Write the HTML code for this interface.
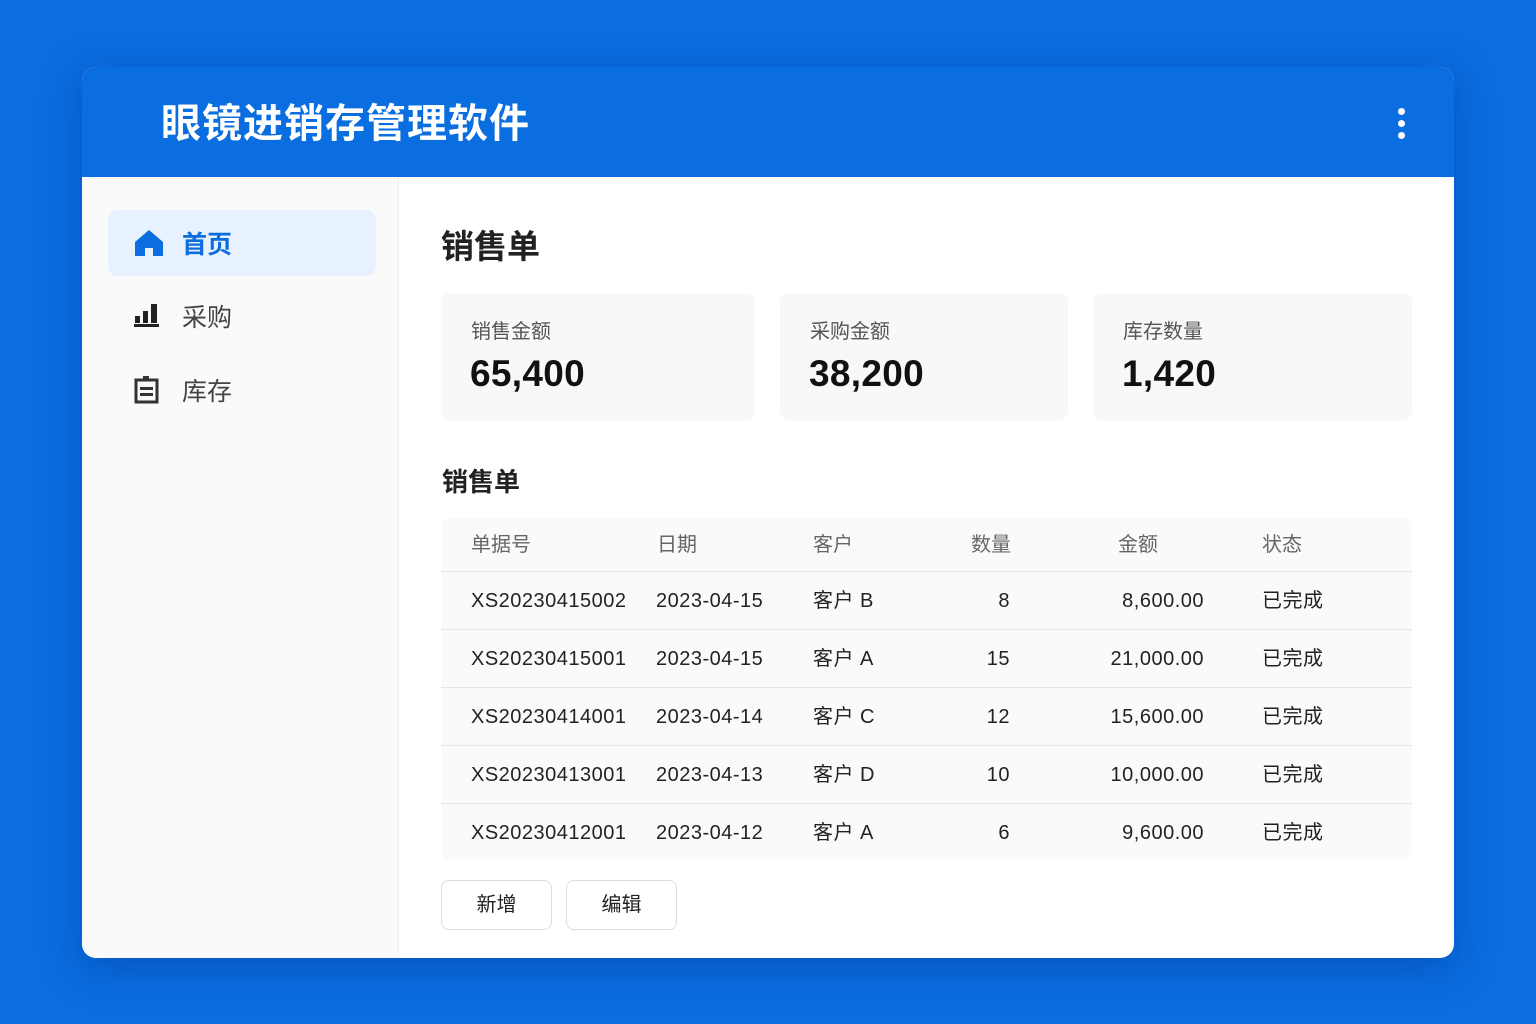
<!DOCTYPE html>
<html><head><meta charset="utf-8"><style>
*{margin:0;padding:0;box-sizing:border-box}
body{width:1536px;height:1024px;background:#0a6de0;font-family:"Liberation Sans","Noto Sans CJK SC",sans-serif;position:relative;overflow:hidden}
.card{position:absolute;left:82px;top:67px;width:1372px;height:891px;background:#fff;border-radius:14px;overflow:hidden;box-shadow:0 10px 40px rgba(0,40,120,.35)}
.hdr{position:absolute;left:0;top:0;width:100%;height:110px;background:#0a6de0}
.hdr h1{position:absolute;left:79px;top:32px;color:#fff;font-size:40px;font-weight:700;letter-spacing:1px;line-height:50px}
.dots{position:absolute;left:1316px;top:41px;width:8px}
.dots i{display:block;width:7px;height:7px;border-radius:50%;background:#fff;margin-bottom:5px}
.side{position:absolute;left:0;top:110px;width:317px;height:781px;background:#fafafa;border-right:1px solid #eee}
.nav{position:absolute;left:26px;width:268px;height:66px;border-radius:10px;font-size:25px;color:#444}
.nav.act{background:#e8f1fe;color:#0a6de0;font-weight:700}
.nav svg{position:absolute;left:26px;top:19px}
.nav span{position:absolute;left:74px;top:18px;line-height:34px}
.main{position:absolute;left:0;top:110px;width:1372px;height:781px;white-space:nowrap}
.t{position:absolute;font-weight:700;color:#222}
.stat{position:absolute;top:116px;height:128px;background:#f8f8f8;border-radius:10px}
.stat .l{position:absolute;left:30px;top:22px;font-size:20px;color:#555}
.stat .n{position:absolute;left:29px;top:60px;font-size:37px;color:#111;font-weight:700;letter-spacing:.3px}
.tbl{position:absolute;left:359px;top:341px;width:971px;height:342px;background:#fafafa;border-radius:8px}
.row{position:absolute;left:0;width:971px;height:58px;border-top:1px solid #e6e6e6;font-size:20px;color:#222;letter-spacing:.5px}
.row div{position:absolute;top:16px;line-height:26px}
.hrow{border-top:none;color:#666;height:53px;letter-spacing:0}
.hrow div{top:14px}
.btn{position:absolute;top:703px;width:111px;height:50px;border:1px solid #ddd;border-radius:8px;background:#fff;font-size:20px;text-align:center;line-height:48px;color:#222}
</style></head><body>
<div class="card">
<div class="hdr"><h1>眼镜进销存管理软件</h1><div class="dots"><i></i><i></i><i></i></div></div>
<div class="side">
<div class="nav act" style="top:33px"><svg width="30" height="28" viewBox="0 0 30 28"><path d="M15 1 L29 13 V27 H19 V19 H11 V27 H1 V13 Z" fill="#0a6de0"/></svg><span>首页</span></div>
<div class="nav" style="top:106px"><svg width="26" height="26" viewBox="0 0 26 26"><rect x="1" y="14" width="5" height="7" fill="#222"/><rect x="9" y="9" width="5" height="12" fill="#222"/><rect x="17" y="2" width="6" height="19" fill="#222"/><rect x="0" y="22" width="25" height="3" fill="#222"/></svg><span>采购</span></div>
<div class="nav" style="top:180px"><svg width="26" height="28" viewBox="0 0 26 28"><rect x="2" y="4" width="21" height="22" fill="none" stroke="#333" stroke-width="3"/><rect x="9" y="0" width="6" height="4" fill="#333"/><rect x="6" y="11" width="13" height="3" fill="#333"/><rect x="6" y="17" width="13" height="3" fill="#333"/></svg><span>库存</span></div>
</div>
<div class="main">
<div class="t" style="left:359px;top:43px;font-size:33px">销售单</div>
<div class="stat" style="left:359px;width:314px"><div class="l">销售金额</div><div class="n">65,400</div></div>
<div class="stat" style="left:698px;width:288px"><div class="l">采购金额</div><div class="n">38,200</div></div>
<div class="stat" style="left:1011px;width:319px"><div class="l">库存数量</div><div class="n">1,420</div></div>
<div class="t" style="left:360px;top:285px;font-size:26px">销售单</div>
<div class="tbl">
<div class="row hrow" style="top:0"><div style="left:30px">单据号</div><div style="left:216px">日期</div><div style="left:372px">客户</div><div style="left:530px">数量</div><div style="left:677px">金额</div><div style="left:821px">状态</div></div>
<div class="row" style="top:53px"><div style="left:30px">XS20230415002</div><div style="left:215px">2023-04-15</div><div style="left:372px">客户 B</div><div style="right:402px">8</div><div style="right:208px">8,600.00</div><div style="left:821px">已完成</div></div>
<div class="row" style="top:111px"><div style="left:30px">XS20230415001</div><div style="left:215px">2023-04-15</div><div style="left:372px">客户 A</div><div style="right:402px">15</div><div style="right:208px">21,000.00</div><div style="left:821px">已完成</div></div>
<div class="row" style="top:169px"><div style="left:30px">XS20230414001</div><div style="left:215px">2023-04-14</div><div style="left:372px">客户 C</div><div style="right:402px">12</div><div style="right:208px">15,600.00</div><div style="left:821px">已完成</div></div>
<div class="row" style="top:227px"><div style="left:30px">XS20230413001</div><div style="left:215px">2023-04-13</div><div style="left:372px">客户 D</div><div style="right:402px">10</div><div style="right:208px">10,000.00</div><div style="left:821px">已完成</div></div>
<div class="row" style="top:285px"><div style="left:30px">XS20230412001</div><div style="left:215px">2023-04-12</div><div style="left:372px">客户 A</div><div style="right:402px">6</div><div style="right:208px">9,600.00</div><div style="left:821px">已完成</div></div>
</div>
<div class="btn" style="left:359px">新增</div>
<div class="btn" style="left:484px">编辑</div>
</div>
</div>
</body></html>
